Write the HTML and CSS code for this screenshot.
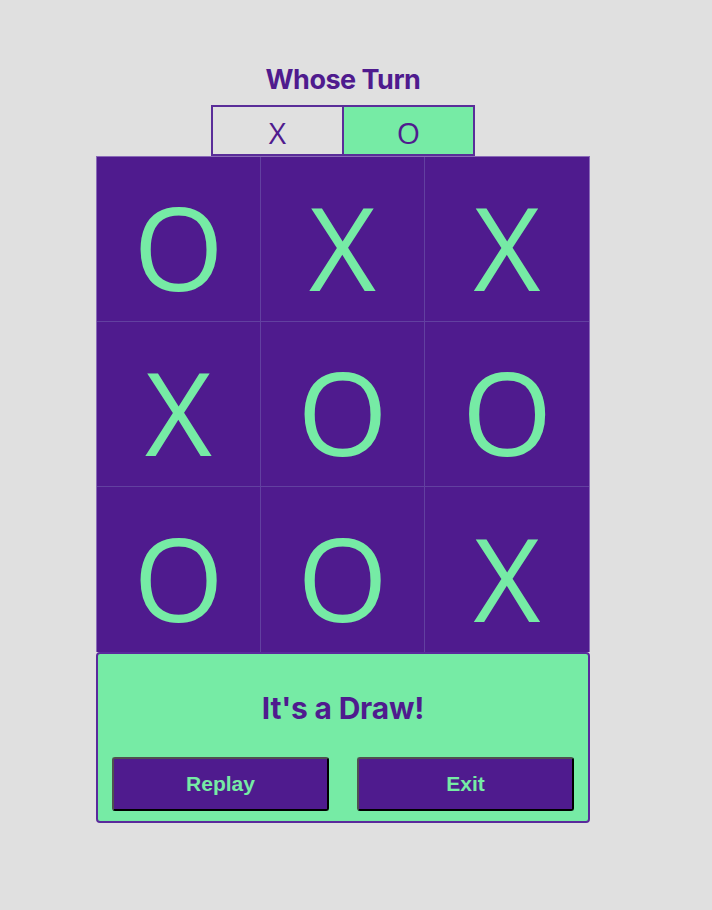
FILE: index.html
```html
<!DOCTYPE html>
<html>
<head>
<meta charset="utf-8">
<link rel="stylesheet" href="styles.css">
</head>
<body>
<div class="game">
  <h1 class="title">Whose Turn</h1>
  <div class="turn">
    <div class="turn-box">X</div>
    <div class="turn-box active">O</div>
  </div>
  <div class="board">
    <div class="cell">O</div>
    <div class="cell">X</div>
    <div class="cell">X</div>
    <div class="cell">X</div>
    <div class="cell">O</div>
    <div class="cell">O</div>
    <div class="cell">O</div>
    <div class="cell">O</div>
    <div class="cell">X</div>
  </div>
  <div class="result">
    <div class="result-text">It's a Draw!</div>
    <div class="actions">
      <button class="btn">Replay</button>
      <button class="btn">Exit</button>
    </div>
  </div>
</div>
</body>
</html>
```
FILE: styles.css
```css
body {
  margin: 0;
  background: #e0e0e0;
  font-family: "Liberation Sans", Arial, sans-serif;
}
.game {
  width: 494px;
  margin-left: 96px;
  padding-top: 62px;
  display: flex;
  flex-direction: column;
  align-items: center;
}
.title {
  margin: 0;
  font-family: Inter, "Liberation Sans", sans-serif;
  font-size: 27px;
  font-weight: 700;
  letter-spacing: -0.5px;
  color: #4f1b8e;
  line-height: 36px;
  height: 43px;
}
.turn {
  display: flex;
  width: 264px;
  height: 51px;
}
.turn-box {
  flex: 1;
  box-sizing: border-box;
  border: 2px solid #5a2d99;
  display: flex;
  align-items: center;
  justify-content: center;
  font-family: "Open Sans", sans-serif;
  font-size: 30px;
  line-height: 1;
  color: #4f1b8e;
  padding-top: 4px;
}
.turn-box + .turn-box {
  border-left: 0;
}
.turn-box.active {
  background: #76eba5;
}
.board {
  width: 494px;
  box-sizing: border-box;
  border: 1px solid #8a6bb8;
  border-bottom: 0;
  display: grid;
  grid-template-columns: repeat(3, 1fr);
  grid-auto-rows: 165px;
  background: #4f1b8e;
}
.cell {
  display: flex;
  align-items: center;
  justify-content: center;
  color: #76eba5;
  font-family: "Open Sans", sans-serif;
  font-size: 116px;
  line-height: 1;
  padding-top: 14px;
  box-sizing: border-box;
  border-right: 1px solid #6240a0;
  border-bottom: 1px solid #6240a0;
}
.cell:nth-child(3n) {
  border-right: 0;
}
.cell:nth-child(n+7) {
  border-bottom: 0;
}
.result {
  width: 494px;
  height: 171px;
  box-sizing: border-box;
  background: #76eba5;
  border: 2px solid #5a2a9c;
  border-radius: 4px;
  display: flex;
  flex-direction: column;
  align-items: center;
}
.result-text {
  margin-top: 36px;
  font-family: Inter, "Liberation Sans", sans-serif;
  font-size: 30px;
  font-weight: 700;
  letter-spacing: -0.2px;
  color: #4f1b8e;
  line-height: 36px;
}
.actions {
  margin-top: 31px;
  width: 462px;
  display: flex;
  justify-content: space-between;
}
.btn {
  width: 217px;
  height: 54px;
  box-sizing: border-box;
  background: #4f1b8e;
  color: #76eba5;
  font-family: "Liberation Sans", Arial, sans-serif;
  font-size: 21px;
  font-weight: 700;
  border: 2px solid;
  border-color: #505050 #000 #000 #505050;
  border-radius: 3px;
  padding: 0;
}
```
